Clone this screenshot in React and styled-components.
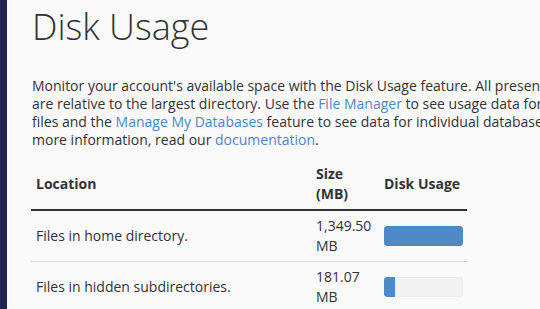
import React from "react";
import styled, { createGlobalStyle } from "styled-components";

const Global = createGlobalStyle`
  html, body { margin: 0; padding: 0; background: #fafafa; overflow: hidden; }
  body { font-family: "Open Sans", "Liberation Sans", sans-serif; color: #333; }
`;

const Page = styled.div`
  display: flex;
  width: 540px;
  height: 309px;
  overflow: hidden;
`;

const Sidebar = styled.div`
  flex: 0 0 7px;
  background: #23234f;
`;

const Main = styled.main`
  flex: 1 0 auto;
  padding-left: 25px;
  min-width: 0;
`;

const Title = styled.h1`
  margin: 7px 0 0;
  font-size: 36px;
  font-weight: 300;
  line-height: 40px;
  color: #333;
  white-space: nowrap;
`;

const Intro = styled.p`
  margin: 30px 0 10px;
  font-size: 14px;
  line-height: 18px;
  white-space: nowrap;
`;

const Link = styled.a`
  color: #4f86c6;
  text-decoration: none;
`;

const Table = styled.table`
  border-collapse: collapse;
  margin-left: -1px;
  font-size: 14px;
  line-height: 20px;
  table-layout: fixed;
  width: 436px;
`;

const Th = styled.th`
  box-sizing: border-box;
  width: ${(p) => p.$w}px;
  text-align: left;
  font-weight: 700;
  padding: 5px 5px;
  vertical-align: middle;
  border-bottom: 2px solid #333;
`;

const Td = styled.td`
  padding: 5px 5px;
  vertical-align: middle;
  border-top: ${(p) => (p.$first ? "none" : "1px solid #ddd")};
`;

const Track = styled.div`
  width: 79px;
  height: 20px;
  border-radius: 3px;
  background: #f2f2f2;
  box-shadow: inset 0 0 0 1px #ececec;
  overflow: hidden;
`;

const Fill = styled.div`
  height: 100%;
  background: #4f89c8;
  border-radius: 3px 0 0 3px;
`;

const rows = [
  { name: "Files in home directory.", size: "1,349.50", pct: 100 },
  { name: "Files in hidden subdirectories.", size: "181.07", pct: 13.4 },
];

export default function App() {
  return (
    <>
      <Global />
      <Page>
        <Sidebar />
        <Main>
          <Title>Disk Usage</Title>
          <Intro>
            Monitor your account's available space with the Disk Usage feature. All presented values
            <br />
            are relative to the largest directory. Use the <Link href="#">File Manager</Link> to see
            usage data for individual
            <br />
            files and the <Link href="#">Manage My Databases</Link> feature to see data for individual
            databases. For
            <br />
            more information, read our <Link href="#">documentation</Link>.
          </Intro>
          <Table>
            <thead>
              <tr>
                <Th $w={280}>Location</Th>
                <Th $w={68}>Size (MB)</Th>
                <Th $w={88}>Disk Usage</Th>
              </tr>
            </thead>
            <tbody>
              {rows.map((r, i) => (
                <tr key={r.name}>
                  <Td $first={i === 0}>{r.name}</Td>
                  <Td $first={i === 0}>
                    {r.size}
                    <br />
                    MB
                  </Td>
                  <Td $first={i === 0}>
                    <Track>
                      <Fill style={{ width: `${r.pct}%`, borderRadius: r.pct >= 100 ? 3 : undefined }} />
                    </Track>
                  </Td>
                </tr>
              ))}
            </tbody>
          </Table>
        </Main>
      </Page>
    </>
  );
}
